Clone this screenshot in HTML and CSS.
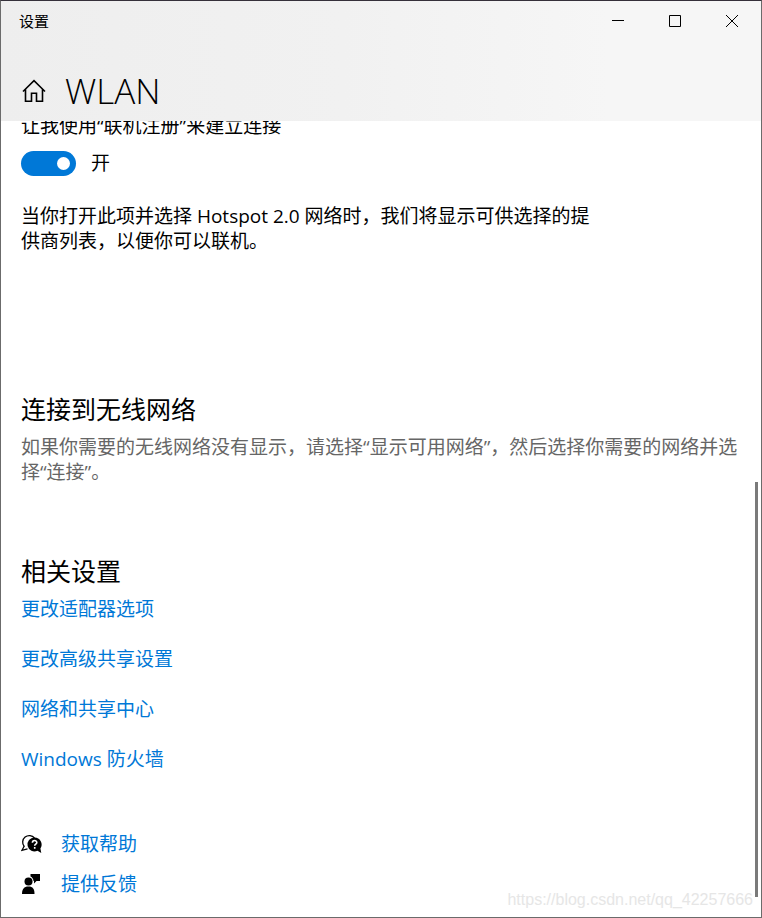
FILE: index.html
```html
<!DOCTYPE html>
<html lang="zh-CN">
<head>
  <meta charset="UTF-8">
  <meta name="viewport" content="width=device-width, initial-scale=1.0">
  <title>设置</title>
  <link rel="stylesheet" href="styles.css">
</head>
<body>
  <div class="window">
    <header class="header">
      <div class="titlebar">
        <span class="app-name">设置</span>
        <div class="controls">
          <button type="button" aria-label="最小化">
            <svg width="12" height="12" viewBox="0 0 12 12"><path d="M0 5.5h12"/></svg>
          </button>
          <button type="button" aria-label="最大化">
            <svg width="12" height="12" viewBox="0 0 12 12"><path d="M.5.5h11v11H.5z"/></svg>
          </button>
          <button type="button" aria-label="关闭">
            <svg width="12" height="12" viewBox="0 0 12 12"><path d="M0 0l12 12M12 0L0 12"/></svg>
          </button>
        </div>
      </div>
      <div class="page-title">
        <a href="#" class="home" aria-label="主页">
          <svg width="24" height="24" viewBox="0 0 24 24"><path d="M1 12.5L12 1.7l11 10.8M3.5 10.5v11.7h6v-8h5v8h6V10.5"/></svg>
        </a>
        <h1>WLAN</h1>
      </div>
    </header>

    <main class="content">
      <div class="scrolled">
        <!-- Hotspot 2.0 -->
        <section class="hotspot">
          <label for="osu">让我使用“联机注册”来建立连接</label>
          <div class="toggle-row">
            <input type="checkbox" role="switch" id="osu" class="toggle" checked>
            <span>开</span>
          </div>
          <p>当你打开此项并选择 Hotspot 2.0 网络时，我们将显示可供选择的提供商列表，以便你可以联机。</p>
        </section>

        <section class="connect">
          <h2>连接到无线网络</h2>
          <p class="muted">如果你需要的无线网络没有显示，请选择“显示可用网络”，然后选择你需要的网络并选择“连接”。</p>
        </section>

        <section class="related">
          <h2>相关设置</h2>
          <ul class="links">
            <li><a href="#">更改适配器选项</a></li>
            <li><a href="#">更改高级共享设置</a></li>
            <li><a href="#">网络和共享中心</a></li>
            <li><a href="#">Windows 防火墙</a></li>
          </ul>
        </section>

        <ul class="support">
          <li>
            <svg width="22" height="22" viewBox="0 0 22 22">
              <path d="M3.200 12.500A6.500 6.500 0 1 1 13.500 4" fill="none" stroke="#000" stroke-width="1.3"/>
              <path d="M3.300 12L1 16.300L6.500 14.800" fill="none" stroke="#000" stroke-width="1.3"/>
              <path d="M13.500 3.500a7 7 0 1 0 3 13.300l3.800 2.200-.9-4.600A7 7 0 0 0 13.500 3.500z"/>
              <path d="M11.400 8.800c0-3 4.400-2.900 4.400-.3 0 1.600-2.100 1.700-2.100 3.300M13.700 13v1.700" fill="none" stroke="#fff" stroke-width="1.6"/>
            </svg>
            <a href="#">获取帮助</a>
          </li>
          <li>
            <svg width="22" height="22" viewBox="0 0 22 22">
              <circle cx="7.500" cy="7.500" r="4"/>
              <path d="M1 20c0-5 2-7.500 6.500-7.500S13.500 15 13.500 20z"/>
              <path d="M9.500 0H19v7h-3.500L13 9.500V7h-.5C12.300 5 11.500 3.500 9.500 2.500z"/>
            </svg>
            <a href="#">提供反馈</a>
          </li>
        </ul>
      </div>
      <div class="scrollbar"></div>
      <span class="watermark">https://blog.csdn.net/qq_42257666</span>
    </main>
  </div>
</body>
</html>
```
FILE: styles.css
```css
* {
  box-sizing: border-box;
  margin: 0;
  padding: 0;
}

body {
  font-family: "Open Sans", "Noto Sans CJK SC", sans-serif;
  font-size: 19px;
  line-height: 25px;
  color: #000;
  background: #fff;
}

ul {
  list-style: none;
}

a {
  color: #0078d7;
  text-decoration: none;
}

.window {
  display: flex;
  flex-direction: column;
  height: 100vh;
  border: 1px solid #6b6b6b;
  border-top-color: #35303a;
}

/* header */
.header {
  flex: none;
  height: 120px;
  background: linear-gradient(90deg, #eee 0%, #f1f1f1 45%, #f6f6f6 80%);
}

.titlebar {
  display: flex;
  justify-content: space-between;
  align-items: center;
  height: 40px;
  padding: 0 1px 0 18px;
}

.app-name {
  font-size: 15px;
}

.controls {
  display: flex;
}

.controls button {
  display: flex;
  align-items: center;
  justify-content: center;
  width: 57px;
  height: 40px;
  border: none;
  background: none;
}

.controls svg {
  fill: none;
  stroke: #000;
  stroke-width: 1;
}

.page-title {
  display: flex;
  align-items: center;
  gap: 19px;
  height: 60px;
  margin-top: 20px;
  padding: 0 21px;
}

.page-title h1 {
  font-size: 35px;
  font-weight: 300;
  line-height: 60px;
}

.home {
  display: flex;
}

.home svg {
  fill: none;
  stroke: #000;
  stroke-width: 1.6;
}

/* content */
.content {
  position: relative;
  flex: 1;
  min-height: 0;
  overflow: hidden;
}

.scrolled {
  margin-top: -7px;
  padding: 0 20px;
}

.hotspot label {
  display: block;
}

.hotspot p {
  max-width: 570px;
  margin-top: 28px;
}

.toggle-row {
  display: flex;
  align-items: center;
  gap: 15px;
  margin-top: 12px;
}

.toggle {
  appearance: none;
  display: flex;
  align-items: center;
  justify-content: flex-end;
  width: 55px;
  height: 25px;
  padding-right: 6px;
  border-radius: 13px;
  background: #0078d7;
}

.toggle::before {
  content: "";
  width: 13px;
  height: 13px;
  border-radius: 50%;
  background: #fff;
}

h2 {
  font-size: 25px;
  font-weight: 400;
  line-height: 34px;
}

.connect {
  margin-top: 138px;
}

.connect p {
  margin-top: 9px;
}

.muted {
  color: #666;
}

.related {
  margin-top: 69px;
}

.links {
  display: flex;
  flex-direction: column;
  gap: 25px;
  margin-top: 9px;
}

.support {
  display: flex;
  flex-direction: column;
  gap: 15px;
  margin-top: 60px;
}

.support li {
  display: flex;
  align-items: center;
  gap: 18px;
}

.scrollbar {
  position: absolute;
  top: 361px;
  right: 3px;
  bottom: 20px;
  width: 3px;
  background: #7a7a7a;
}

.watermark {
  position: absolute;
  right: 8px;
  bottom: 5px;
  font-family: "Liberation Sans", sans-serif;
  font-size: 16px;
  color: #e6e6e6;
}
```
